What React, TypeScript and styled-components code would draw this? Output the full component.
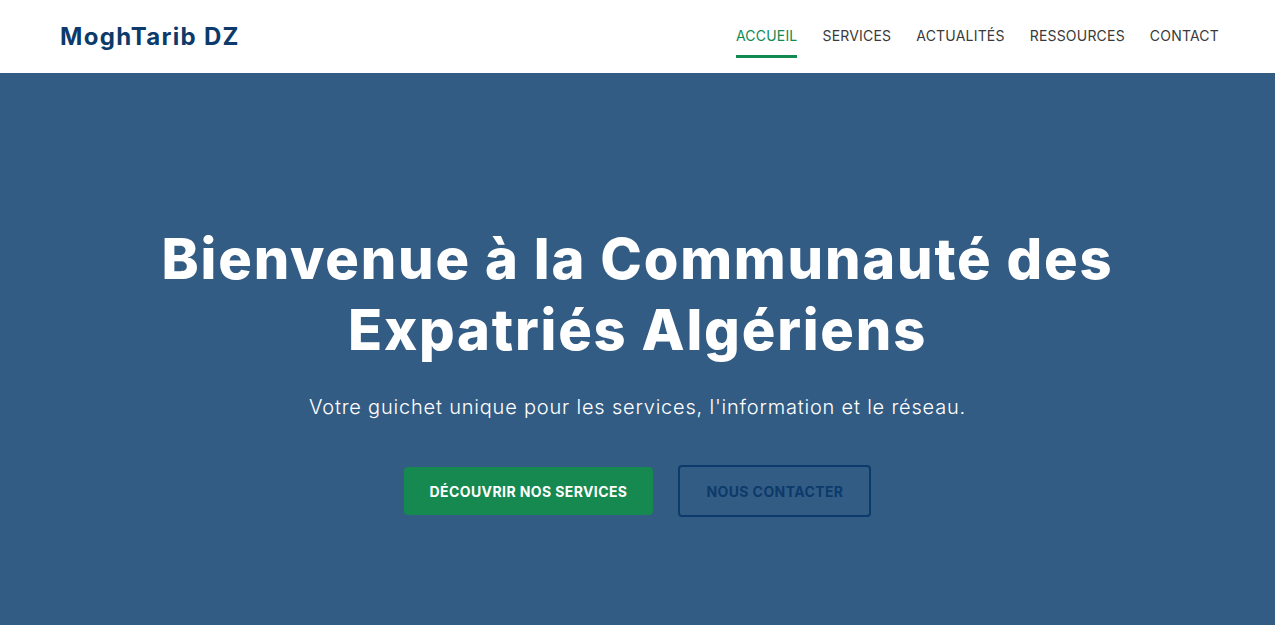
import React from 'react';
import styled, { createGlobalStyle } from 'styled-components';

const GlobalStyle = createGlobalStyle`
    * {
        box-sizing: border-box;
    }

    body {
        margin: 0;
        font-family: Inter, "Noto Sans", "Liberation Sans", sans-serif;
        background: #335c84;
    }
`;

const Header = styled.header`
    height: 73px;
    background: #ffffff;
    display: flex;
    align-items: center;
    justify-content: space-between;
    padding: 0 56px 0 60px;
`;

const Logo = styled.div`
    font-size: 24px;
    font-weight: 700;
    color: #0b3a6b;
    letter-spacing: 1.3px;
`;

const Nav = styled.nav`
    display: flex;
    align-items: center;
    gap: 25px;
    height: 100%;
`;

const NavLink = styled.a<{ $active?: boolean }>`
    position: relative;
    font-size: 14px;
    text-transform: uppercase;
    letter-spacing: 0.2px;
    color: ${({ $active }) => ($active ? '#138a4f' : '#3a3a3a')};
    text-decoration: none;
    padding: 7px 0 9px;

    &::after {
        content: '';
        display: ${({ $active }) => ($active ? 'block' : 'none')};
        position: absolute;
        left: 0;
        right: 0;
        bottom: -5px;
        height: 3px;
        background: #138a4f;
    }
`;

const Hero = styled.section`
    background: #335c84;
    min-height: 560px;
    display: flex;
    flex-direction: column;
    align-items: center;
    padding-top: 151px;
    text-align: center;
    color: #ffffff;
`;

const Title = styled.h1`
    margin: 0;
    font-size: 56px;
    font-weight: 800;
    line-height: 71px;
    letter-spacing: 1.8px;
    max-width: 1000px;
`;

const Subtitle = styled.p`
    margin: 29px 0 0;
    font-size: 20px;
    font-weight: 300;
    letter-spacing: 0.8px;
`;

const Actions = styled.div`
    margin-top: 46px;
    display: flex;
    align-items: center;
    gap: 25px;
`;

const Button = styled.a<{ $outline?: boolean }>`
    display: inline-flex;
    align-items: center;
    justify-content: center;
    height: ${({ $outline }) => ($outline ? '52px' : '48px')};
    padding: 0 ${({ $outline }) => ($outline ? '26px' : '26px')};
    border-radius: 4px;
    font-size: 14px;
    font-weight: 700;
    text-transform: uppercase;
    letter-spacing: 0.4px;
    text-decoration: none;
    color: ${({ $outline }) => ($outline ? '#0b3a6b' : '#ffffff')};
    background: ${({ $outline }) => ($outline ? 'transparent' : '#15894f')};
    border: ${({ $outline }) => ($outline ? '2px solid #0b3a6b' : 'none')};
`;

export default function App() {
    const links = ['Accueil', 'Services', 'Actualités', 'Ressources', 'Contact'];

    return (
        <>
            <GlobalStyle />
            <Header>
                <Logo>MoghTarib DZ</Logo>
                <Nav>
                    {links.map((link, i) => (
                        <NavLink key={link} href="#" $active={i === 0}>
                            {link}
                        </NavLink>
                    ))}
                </Nav>
            </Header>
            <Hero>
                <Title>Bienvenue à la Communauté des Expatriés Algériens</Title>
                <Subtitle>Votre guichet unique pour les services, l'information et le réseau.</Subtitle>
                <Actions>
                    <Button href="#">Découvrir nos services</Button>
                    <Button href="#" $outline>Nous contacter</Button>
                </Actions>
            </Hero>
        </>
    );
}
